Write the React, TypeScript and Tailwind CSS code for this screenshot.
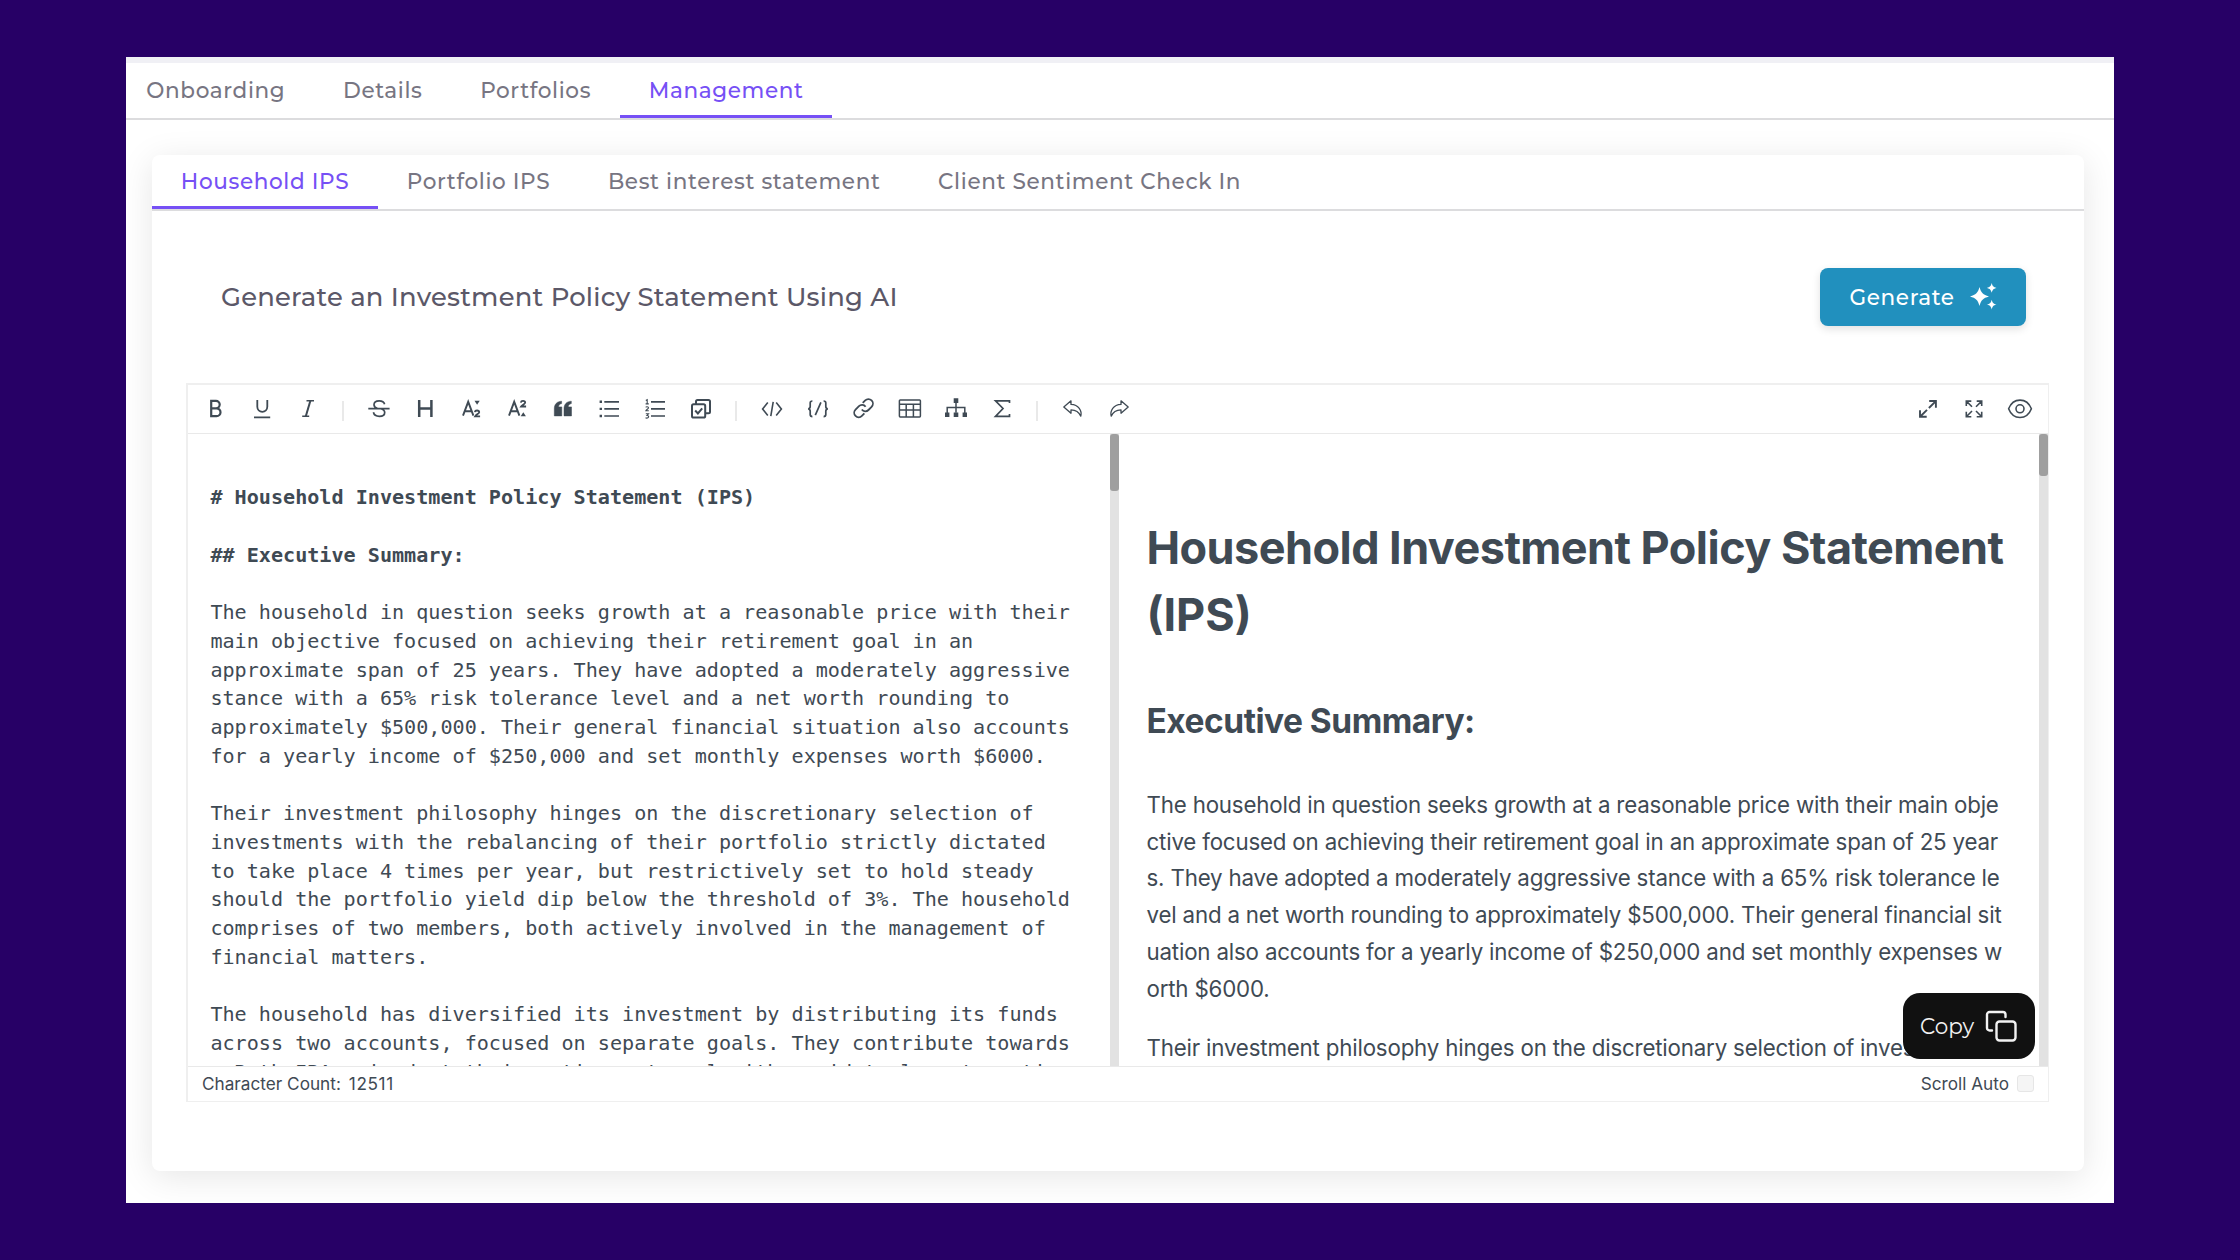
import type { ReactNode } from "react";

const source: { text: string; bold?: boolean }[] = [
  { text: "# Household Investment Policy Statement (IPS)", bold: true },
  { text: "" },
  { text: "## Executive Summary:", bold: true },
  { text: "" },
  { text: "The household in question seeks growth at a reasonable price with their" },
  { text: "main objective focused on achieving their retirement goal in an" },
  { text: "approximate span of 25 years. They have adopted a moderately aggressive" },
  { text: "stance with a 65% risk tolerance level and a net worth rounding to" },
  { text: "approximately $500,000. Their general financial situation also accounts" },
  { text: "for a yearly income of $250,000 and set monthly expenses worth $6000." },
  { text: "" },
  { text: "Their investment philosophy hinges on the discretionary selection of" },
  { text: "investments with the rebalancing of their portfolio strictly dictated" },
  { text: "to take place 4 times per year, but restrictively set to hold steady" },
  { text: "should the portfolio yield dip below the threshold of 3%. The household" },
  { text: "comprises of two members, both actively involved in the management of" },
  { text: "financial matters." },
  { text: "" },
  { text: "The household has diversified its investment by distributing its funds" },
  { text: "across two accounts, focused on separate goals. They contribute towards" },
  { text: "a Roth IRA, aimed at their retirement goal with a mid to long-term time" },
];

const preview = [
  "The household in question seeks growth at a reasonable price with their main obje",
  "ctive focused on achieving their retirement goal in an approximate span of 25 year",
  "s. They have adopted a moderately aggressive stance with a 65% risk tolerance le",
  "vel and a net worth rounding to approximately $500,000. Their general financial sit",
  "uation also accounts for a yearly income of $250,000 and set monthly expenses w",
  "orth $6000.",
];

function Icon({ children, w = 1.8, className = "" }: { children: ReactNode; w?: number; className?: string }) {
  return (
    <button className={`flex h-[46px] w-[46px] shrink-0 items-center justify-center ${className}`}>
      <svg
        className="h-6 w-6 overflow-visible"
        viewBox="0 0 24 24"
        fill="none"
        stroke="#3f4a54"
        strokeWidth={w}
        strokeLinecap="butt"
        strokeLinejoin="miter"
      >
        {children}
      </svg>
    </button>
  );
}

function Divider() {
  return (
    <div className="flex h-[46px] w-[25px] shrink-0 items-center justify-center">
      <div className="mt-[4px] h-[20px] w-[2px] bg-[#e9e9e9]" />
    </div>
  );
}

const undoPath = "M10 3.800 2.800 10l7.200 6.200v-3.400c4.600 0 7.800 1.600 9.800 6.400 1.400-5.800-2.200-11.400-9.800-11.800z";

function Toolbar() {
  return (
    <div className="flex h-[49px] shrink-0 items-center border-b border-[#e9e9e9] pl-[4.500px] pr-[5.500px]">
      <Icon w={2.2}>
        <path d="M7.200 3.900h4.800a3.700 3.700 0 0 1 0 7.400H7.200zM7.200 11.300h5.400a3.900 3.900 0 0 1 0 7.800H7.200z" />
      </Icon>
      <Icon>
        <path d="M7.300 3v6.800a5 5 0 0 0 10 0V3M4 20.300h16.200" />
      </Icon>
      <Icon w={1.5}>
        <path d="M10.500 3.700h7.500M6.200 19.300h7" />
        <path d="M14.400 3.700 9.800 19.300" strokeWidth={2} />
      </Icon>
      <Divider />
      <Icon w={1.7}>
        <path d="M17.600 7.200C17 4.900 15 3.800 12.200 3.800c-3 0-5.200 1.400-5.200 3.900 0 2 1.300 3.100 3.600 3.900M13.800 11.700c2.500.7 3.900 1.800 3.900 3.700 0 2.500-2.200 3.900-5.300 3.900s-5.400-1.300-6-4M1.300 11.600h21.300" />
      </Icon>
      <Icon w={2.5}>
        <path d="M6.200 3v17M18.400 3v17M6.200 11.400h12.200" />
      </Icon>
      <Icon w={1.9}>
        <path d="M4 18.700 9.200 4.800 14.400 18.700M5.800 14.200h6.800" />
        <path d="M15.800 15.200c.2-1.100 1-1.700 2.200-1.700s2.200.6 2.200 1.700c0 1.500-2.800 2-4.100 4.200h5" strokeWidth={1.8} />
        <path d="M15.500 3.800h5.200l-2.600 4z" fill="#3f4a54" stroke="none" />
      </Icon>
      <Icon w={1.9}>
        <path d="M4 18.700 9.200 4.800 14.400 18.700M5.800 14.200h6.800" />
        <path d="M15.800 5.600c.2-1.100 1-1.700 2.200-1.700s2.200.6 2.200 1.700c0 1.400-2.800 1.900-4.100 3.900h5" strokeWidth={1.8} />
        <path d="M15.700 19.200h5.200l-2.600-4z" fill="#3f4a54" stroke="none" />
      </Icon>
      <Icon w={0.5}>
        <path
          d="M10.600 4.200v2.400c-2 .4-2.900 1.500-3 3.300h3.200v9H3.300V12c0-4.800 2.600-7.600 7.300-7.800zM20.300 4.200v2.400c-2 .4-2.900 1.500-3 3.300h3.200v9H13V12c0-4.800 2.600-7.600 7.300-7.800z"
          fill="#3f4a54"
          strokeLinejoin="round"
        />
      </Icon>
      <Icon w={1.7}>
        <path d="M7.300 4.800H22M7.300 11.900H22M7.300 19H22" />
        <path d="M2.600 4.800h2.400M2.600 11.900h2.400M2.600 19h2.400" strokeWidth={2.4} />
      </Icon>
      <Icon w={1.7}>
        <path d="M8 4.800h14M8 11.900h14M8 19h14" />
        <g strokeWidth={1.1}>
          <path d="M2.800 3.600 4.200 2.800v4M2.600 6.900h3.200" />
          <path d="M2.800 10.400c.2-.9 2.700-1 2.700.4 0 1.200-2.300 1.600-2.700 3h3" />
          <path d="M2.800 16.800h2.700L4 18.500c2.300 0 2.200 2.700-.2 2.600-.6 0-1-.2-1.200-.5" />
        </g>
      </Icon>
      <Icon w={2}>
        <rect x="3" y="7.300" width="13.200" height="13.200" rx="1.600" />
        <path d="M7 7V4.400A1.500 1.500 0 0 1 8.500 2.900h11A1.500 1.500 0 0 1 21 4.400v10.400a1.500 1.500 0 0 1-1.500 1.500h-3" />
        <path d="m6.200 13.500 2.700 2.900 4.300-5" />
      </Icon>
      <Divider />
      <Icon w={1.6}>
        <path d="M7.800 5.600 2.600 12l5.200 6.400M16.200 5.600l5.200 6.400-5.200 6.400M13.200 4.800l-2.400 14.400" />
      </Icon>
      <Icon w={1.7}>
        <path d="M6.400 4C4.600 4 4.200 4.600 4.200 6v3.400c0 1.400-.5 2.200-2 2.400 1.500.2 2 1 2 2.400v3.400c0 1.400.4 2 2.200 2M17.600 4c1.800 0 2.200.6 2.200 2v3.400c0 1.400.5 2.200 2 2.400-1.500.2-2 1-2 2.400v3.400c0 1.400-.4 2-2.200 2" />
        <path d="m14.900 5.400-5.600 12.800" />
      </Icon>
      <Icon w={1.9}>
        <g transform="translate(.3 -.3) scale(.95)">
          <path d="M10 13.500a4.600 4.600 0 0 0 7 .5l3.300-3.400a4.700 4.700 0 0 0-6.700-6.700L11 6.600" />
          <path d="M14 10.500a4.600 4.600 0 0 0-7-.5l-3.600 3.600a4.700 4.700 0 0 0 6.700 6.700l2.600-2.700" />
        </g>
      </Icon>
      <Icon w={1.5}>
        <rect x="1.400" y="2.900" width="21" height="17" rx=".8" />
        <path d="M1.400 7.200h21M1.400 13h21M8.200 7.200v12.700M15.400 7.200v12.700" />
      </Icon>
      <Icon w={1.5}>
        <path d="M12 5.300v10.500M3.200 16v-5.400h17.600V16" />
        <path
          d="M9.700 1.300h4.600v4.600H9.700zM1 15.600h4.400V20H1zM9.700 15.600h4.600V20H9.700zM18.600 15.600H23V20h-4.400z"
          fill="#3f4a54"
          stroke="none"
        />
      </Icon>
      <Icon w={1.7}>
        <path d="M19.500 6V3.800H5.500l7.500 7.700-7.500 7.800h14V17" />
      </Icon>
      <Divider />
      <Icon w={1.3}>
        <path d={undoPath} strokeLinejoin="round" />
      </Icon>
      <Icon w={1.3}>
        <path d={undoPath} strokeLinejoin="round" transform="matrix(-1 0 0 1 24 0)" />
      </Icon>
      <Icon w={1.9} className="ml-auto">
        <path d="M12.900 11 19.600 4.300M13.200 4h6.700v6.700M11 12.800 4.300 19.500M4 13.200v6.600h6.700" />
      </Icon>
      <Icon w={1.6}>
        <path d="M4.300 9V4.100h5M4.300 4.100 10 9.800M14.700 4.100h5V9M19.700 4.100 14 9.800M4.300 14.800v4.900h5M4.300 19.700 10 14M14.700 19.700h5v-4.900M19.700 19.700 14 14" />
      </Icon>
      <Icon w={1.6}>
        <path
          d="M.6 11.800C2.800 6.200 6.800 3.100 12 3.100s9.200 3.100 11.400 8.700c-2.200 5.600-6.200 8.700-11.400 8.700S2.800 17.400.6 11.800z"
          strokeLinejoin="round"
        />
        <circle cx="12" cy="11.800" r="4" />
      </Icon>
    </div>
  );
}

function Tab({ label, active, pad }: { label: string; active?: boolean; pad: string }) {
  return (
    <button
      className={`h-full whitespace-nowrap border-b-[3px] px-[28.800px] text-[21.550px] font-medium tracking-[0.630px] ${pad} ${
        active ? "border-[#7650f5] text-[#7650f5]" : "border-transparent text-[#777582]"
      }`}
    >
      {label}
    </button>
  );
}

export default function App() {
  return (
    <div className="h-[1260px] w-[2240px] overflow-hidden bg-[#270066] pl-[126px] pt-[57px] font-['Montserrat','Inter',sans-serif]">
      <div className="flex h-[1145.500px] w-[1988px] flex-col overflow-hidden border-t-[6px] border-[#f0f0f5] bg-white">
        <nav className="flex h-[57px] shrink-0 border-b-2 border-[#dcdcde]">
          <div className="-ml-[8.500px] flex">
            <Tab label="Onboarding" pad="pt-[3px]" />
            <Tab label="Details" pad="pt-[3px]" />
            <Tab label="Portfolios" pad="pt-[3px]" />
            <Tab label="Management" pad="pt-[3px]" active />
          </div>
        </nav>
        <section className="ml-[26px] mt-[34.700px] flex h-[1016px] w-[1932px] flex-col rounded-[8px] bg-white shadow-[0_6px_34px_rgba(0,0,0,0.100)]">
          <nav className="flex h-[56px] shrink-0 border-b-2 border-[#dcdcde]">
            <Tab label="Household IPS" pad="pt-[1px]" active />
            <Tab label="Portfolio IPS" pad="pt-[1px]" />
            <Tab label="Best interest statement" pad="pt-[1px]" />
            <Tab label="Client Sentiment Check In" pad="pt-[1px]" />
          </nav>
          <header className="mt-[57.500px] flex h-[57.500px] shrink-0 items-center justify-between pl-[69px] pr-[58px]">
            <h2 className="text-[25.860px] font-medium tracking-[0.220px] text-[#5b5868]">
              Generate an Investment Policy Statement Using AI
            </h2>
            <button className="flex h-full w-[206px] items-center rounded-[8px] bg-[#2190be] pl-[29.500px] text-[21.550px] font-medium tracking-[0.616px] text-white shadow-[0_3px_9px_rgba(0,0,0,0.120)]">
              Generate
              <svg className="ml-auto mr-[29px] h-[27px] w-[27px]" viewBox="0 0 27 27" fill="#fff">
                <path d="M9.500 4c1.600 5.800 3.500 7.800 9.500 9.400-6 1.600-7.900 3.600-9.500 9.500C7.900 17 6 15 0 13.400 6 11.800 7.900 9.800 9.500 4zM21.700 0c.8 3.100 1.700 4.100 4.800 4.900-3.100.8-4 1.800-4.800 4.900-.8-3.100-1.700-4.100-4.800-4.900 3.100-.8 4-1.800 4.800-4.900zM21.700 16.700c.8 3.100 1.700 4.100 4.800 4.900-3.100.8-4 1.800-4.800 4.900-.8-3.100-1.700-4.100-4.800-4.900 3.100-.8 4-1.800 4.800-4.900z" />
              </svg>
            </button>
          </header>
          <div className="relative ml-[34px] mt-[57.500px] flex h-[718.500px] w-[1863px] flex-col border-2 border-b border-r border-[#efefef] text-[#3f4a54]">
            <Toolbar />
            <div className="flex min-h-0 flex-1">
              <div className="w-[921.500px] shrink-0 overflow-hidden whitespace-pre pl-[22.400px] pt-[49.200px] font-['DejaVu_Sans_Mono',monospace] text-[20.114px] leading-[28.733px]">
                {source.map((line, i) => (
                  <div key={i} className={line.bold ? "h-[28.733px] font-bold" : "h-[28.733px]"}>
                    {line.text}
                  </div>
                ))}
              </div>
              <div className="w-[9px] shrink-0 bg-[#e2e2e2]">
                <div className="h-[57px] rounded-[3px] bg-[#9f9f9f]" />
              </div>
              <div className="min-w-0 flex-1 overflow-hidden whitespace-nowrap pl-[28px] pt-[80px] font-['Inter',sans-serif]">
                <h1 className="text-[45px] font-bold leading-[67px] tracking-[-0.550px]">
                  Household Investment Policy Statement
                  <br />
                  <span className="tracking-normal">(IPS)</span>
                </h1>
                <h2 className="mt-[48.300px] text-[33.500px] font-bold leading-[50px] tracking-[-0.500px]">Executive Summary:</h2>
                <p className="mt-[40.300px] text-[22.300px] leading-[36.770px] tracking-[-0.180px]">
                  {preview.map((line) => (
                    <span key={line} className="block">
                      {line}
                    </span>
                  ))}
                </p>
                <p className="mt-[22.700px] text-[22.300px] leading-[36.770px] tracking-[-0.180px]">
                  Their investment philosophy hinges on the discretionary selection of inves
                </p>
              </div>
              <div className="w-[9px] shrink-0 bg-[#e2e2e2]">
                <div className="h-[42px] rounded-[3px] bg-[#9f9f9f]" />
              </div>
            </div>
            <footer className="flex h-[35px] shrink-0 items-center border-t border-[#e9e9e9] pl-[14px] pr-[14px] font-['Inter',sans-serif] text-[17.200px]">
              <span>Character Count:</span>
              <span className="ml-[8px] tracking-[0.600px]">12511</span>
              <span className="ml-auto">Scroll Auto</span>
              <span className="ml-[8px] h-[17.500px] w-[17px] rounded-[3px] border border-[#e6e6e6] bg-[#f5f5f5]" />
            </footer>
            <button className="absolute bottom-[41.500px] right-[13px] flex h-[66px] w-[132px] items-center rounded-[17px] bg-[#111] pl-[17px] text-[21.500px] text-[#f2f2f2]">
              Copy
              <svg
                className="ml-auto mr-[18px] h-[32px] w-[32px]"
                viewBox="0 0 32 32"
                fill="none"
                stroke="#f2f2f2"
                strokeWidth="2.400"
                strokeLinecap="round"
              >
                <rect x="11.500" y="11.500" width="19" height="19" rx="3" />
                <path d="M7 20.500H4.600A2.600 2.600 0 0 1 2 17.900V4.600A2.600 2.600 0 0 1 4.600 2h13.300a2.600 2.600 0 0 1 2.600 2.600V7" />
              </svg>
            </button>
          </div>
        </section>
      </div>
    </div>
  );
}
